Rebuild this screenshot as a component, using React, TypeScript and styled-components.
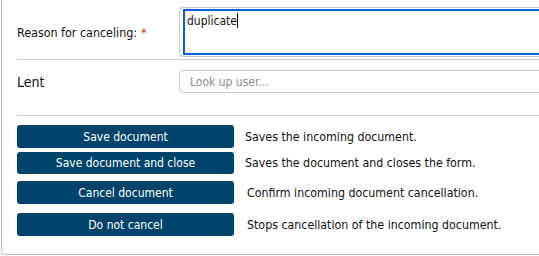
import React from "react"
import styled, { createGlobalStyle } from "styled-components"

const GlobalStyle = createGlobalStyle`
  html, body {
    margin: 0;
    padding: 0;
    background: #ffffff;
    overflow: hidden;
  }
  body {
    font-family: "DejaVu Sans Condensed", "DejaVu Sans", sans-serif;
    font-size: 12px;
    color: #111111;
  }
`

const Panel = styled.div`
  margin-left: 1px;
  width: 538px;
  height: 255px;
  box-sizing: border-box;
  border: 1px solid #bdbdbd;
  border-top: none;
  border-right: none;
  border-radius: 0 0 0 5px;
  padding: 0 0 0 15px;
  display: flex;
  flex-direction: column;
`

const FormRow = styled.div<{ $pad: string }>`
  display: grid;
  grid-template-columns: 162px 1fr;
  align-items: center;
  padding: ${({ $pad }) => $pad};
  border-bottom: 1px solid #cfcfcf;
`

const Label = styled.label<{ $large?: boolean }>`
  font-size: ${({ $large }) => ($large ? "14px" : "12.4px")};
  color: #111111;
`

const Required = styled.span`
  color: #e0201b;
  margin-left: 4px;
`

const TextAreaWrap = styled.div`
  height: 50px;
  box-sizing: border-box;
  border: 1px solid #c9c9c9;
  border-right: none;
  border-radius: 4px 0 0 4px;
  padding: 1px 0 1px 3px;
  display: flex;
`

const TextArea = styled.div`
  flex: 1;
  box-sizing: border-box;
  border: 2px solid #0a60dc;
  border-right: none;
  padding: 2px 2px;
  font-size: 12px;
  color: #111;
  line-height: 14px;
`

const Caret = styled.span`
  display: inline-block;
  width: 1px;
  height: 15px;
  background: #000;
  vertical-align: -3px;
`

const LookupInput = styled.div`
  height: 23px;
  box-sizing: border-box;
  border: 1px solid #c9c9c9;
  border-right: none;
  border-radius: 5px 0 0 5px;
  padding: 0 10px;
  display: flex;
  align-items: center;
  color: #8a8a8a;
  font-size: 12px;
`

const Actions = styled.div`
  display: flex;
  flex-direction: column;
  padding-top: 9px;
`

const ActionRow = styled.div<{ $gap: number; $h: number; $indent: number }>`
  display: grid;
  grid-template-columns: 217px 1fr;
  align-items: center;
  column-gap: ${({ $indent }) => $indent}px;
  margin-bottom: ${({ $gap }) => $gap}px;
  height: ${({ $h }) => $h}px;
`

const ActionButton = styled.button`
  height: 100%;
  border: none;
  border-radius: 3px;
  background: #00436b;
  color: #ffffff;
  font-family: "DejaVu Sans Condensed", "DejaVu Sans", sans-serif;
  font-size: 12px;
  padding: 0;
  cursor: pointer;
`

const ActionText = styled.span`
  font-size: 12.3px;
  color: #111;
`

const actions = [
  { label: "Save document", text: "Saves the incoming document.", gap: 4, h: 23, indent: 11 },
  { label: "Save document and close", text: "Saves the document and closes the form.", gap: 7, h: 22, indent: 11 },
  { label: "Cancel document", text: "Confirm incoming document cancellation.", gap: 9, h: 23, indent: 13 },
  { label: "Do not cancel", text: "Stops cancellation of the incoming document.", gap: 0, h: 23, indent: 13 },
]

export default function App() {
  return (
    <>
      <GlobalStyle />
      <Panel>
        <FormRow $pad="7px 0 2px">
          <Label>
            Reason for canceling:<Required>*</Required>
          </Label>
          <TextAreaWrap>
            <TextArea>
              duplicate<Caret />
            </TextArea>
          </TextAreaWrap>
        </FormRow>
        <FormRow $pad="10px 0 22px">
          <Label $large>Lent</Label>
          <LookupInput>Look up user...</LookupInput>
        </FormRow>
        <Actions>
          {actions.map((a) => (
            <ActionRow key={a.label} $gap={a.gap} $h={a.h} $indent={a.indent}>
              <ActionButton>{a.label}</ActionButton>
              <ActionText>{a.text}</ActionText>
            </ActionRow>
          ))}
        </Actions>
      </Panel>
    </>
  )
}
